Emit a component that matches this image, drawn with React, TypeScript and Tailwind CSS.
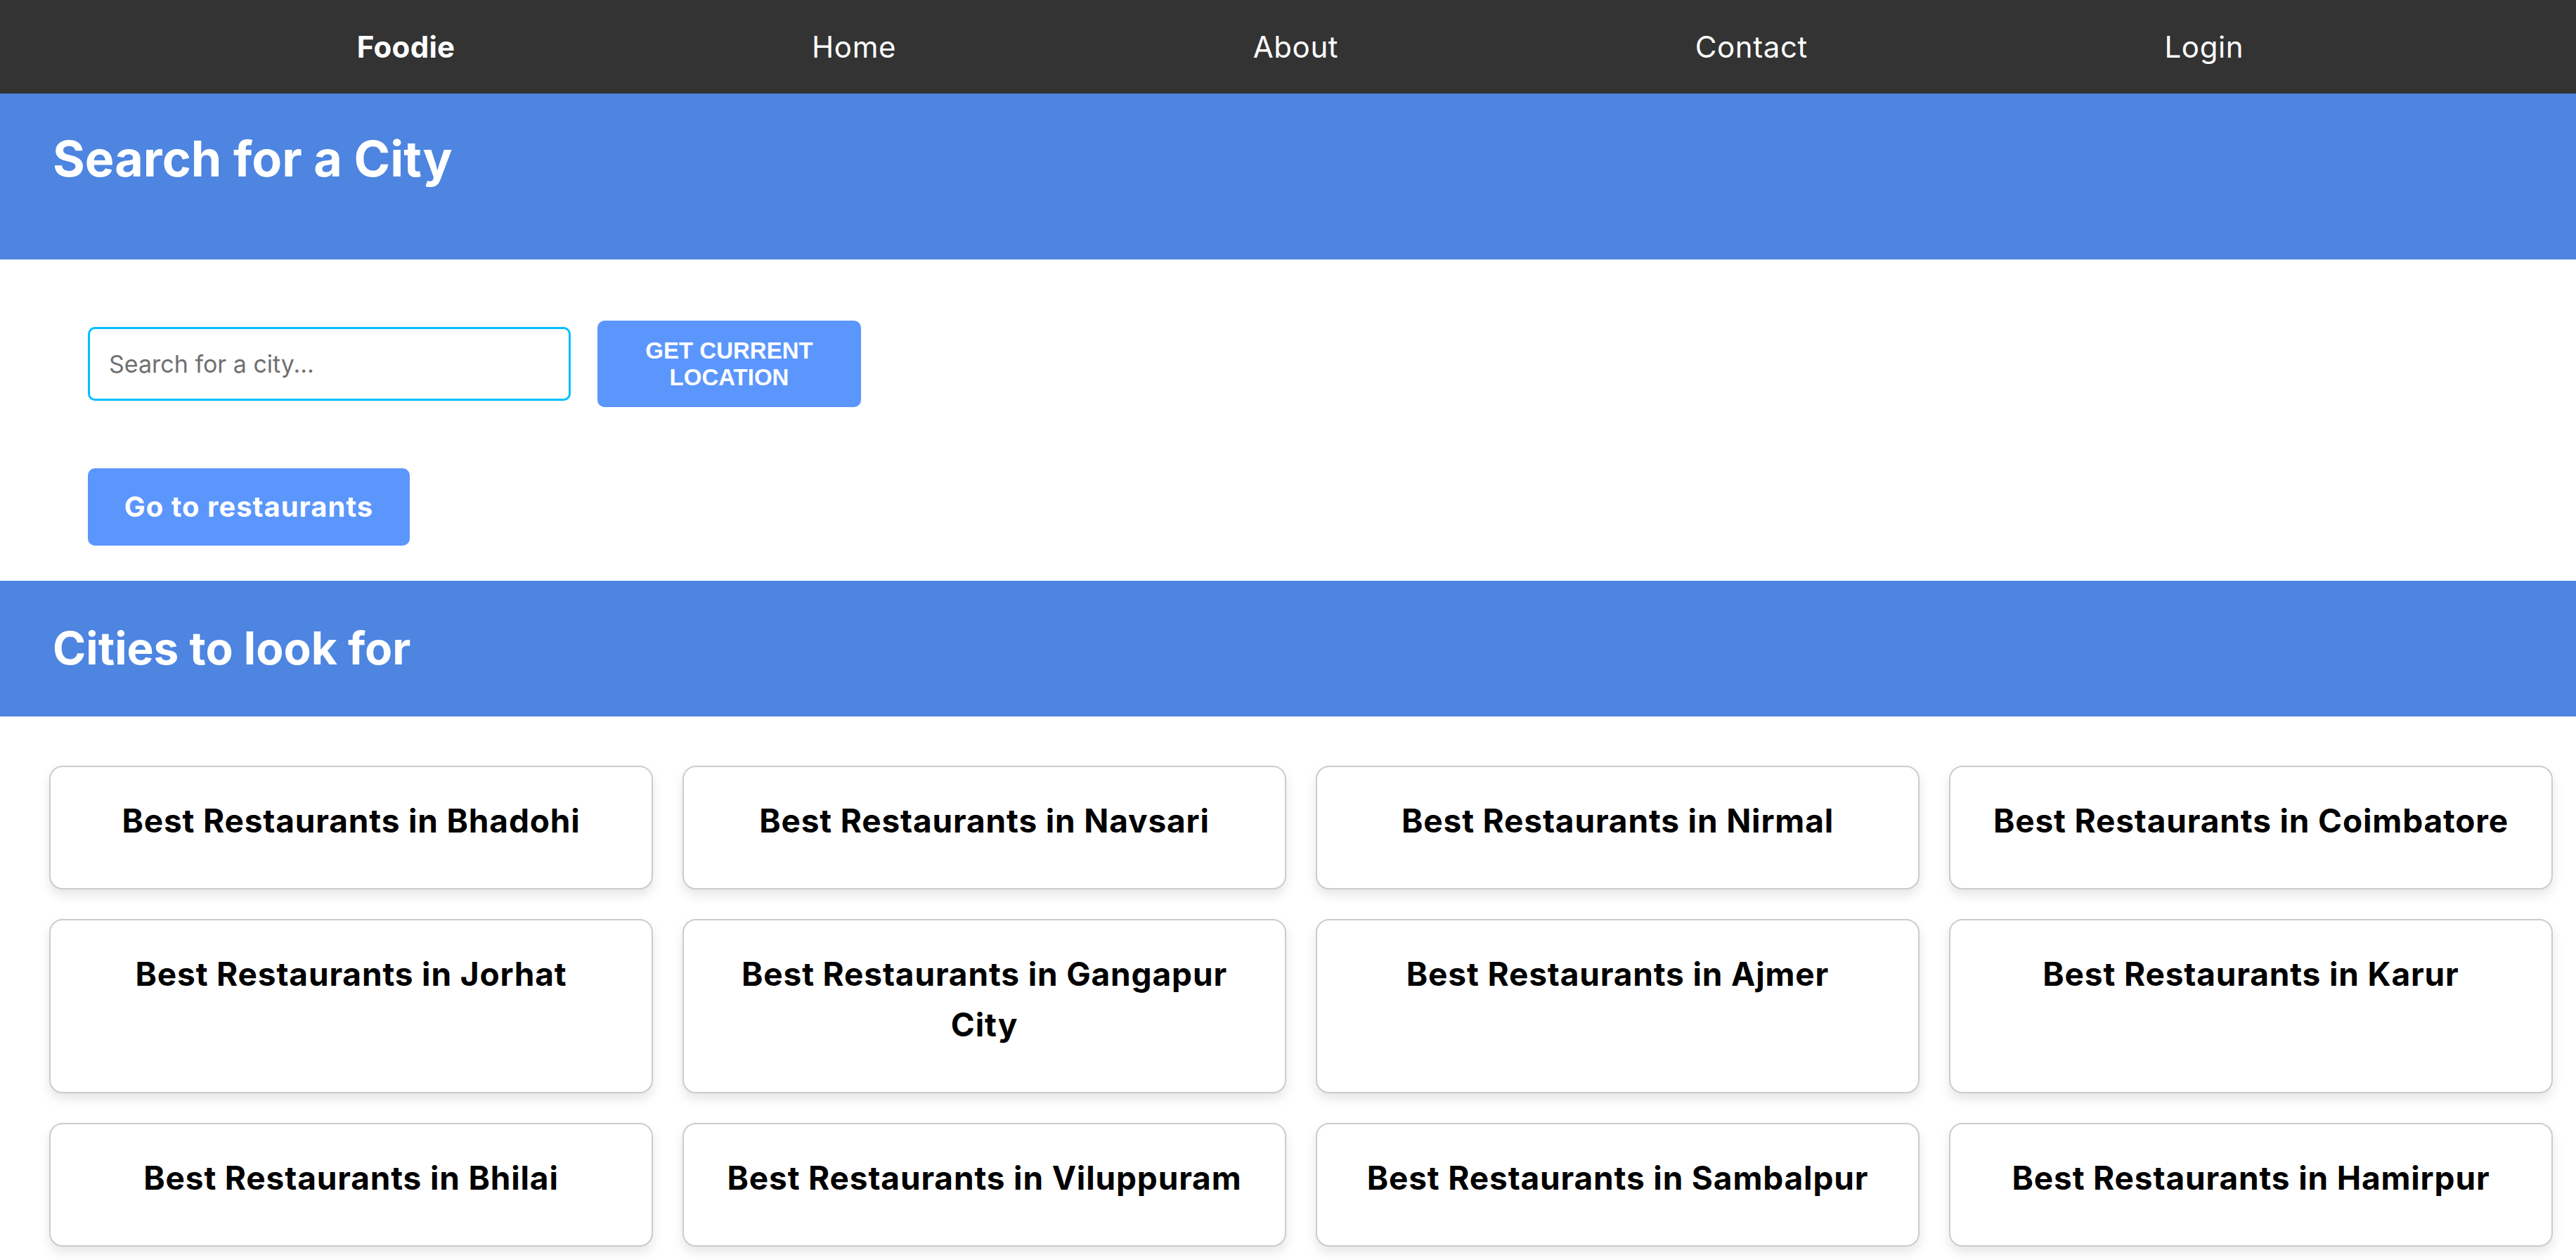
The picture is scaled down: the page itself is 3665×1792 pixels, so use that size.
import React from 'react';

const NAV = ['Home', 'About', 'Contact', 'Login'];

const CITIES = [
  'Bhadohi',
  'Navsari',
  'Nirmal',
  'Coimbatore',
  'Jorhat',
  'Gangapur City',
  'Ajmer',
  'Karur',
  'Bhilai',
  'Viluppuram',
  'Sambalpur',
  'Hamirpur',
];

export default function App() {
  return (
    <div className="min-h-screen bg-white font-['Inter',sans-serif]">
      {/* Top nav */}
      <nav className="h-[133px] bg-[#333333] flex items-center justify-around pl-[254px] pr-[219px]">
        <a className="text-white text-[42px] font-bold tracking-[0.3px]">Foodie</a>
        {NAV.map((item) => (
          <a key={item} className="text-white text-[42px] font-normal tracking-[0.6px]">
            {item}
          </a>
        ))}
      </nav>

      {/* Search band */}
      <section className="h-[236px] bg-[#4d85e1] px-[75px] pt-[53px]">
        <h1 className="text-white text-[70px] font-bold leading-[80px]">Search for a City</h1>
      </section>

      {/* Search controls */}
      <section className="pl-[125px] pt-[87px] pb-[50px]">
        <div className="flex items-center gap-[38px]">
          <input
            type="text"
            placeholder="Search for a city..."
            className="w-[687px] h-[105px] border-[3px] border-[#00bfff] rounded-[10px] px-[27px] text-[34px] outline-none placeholder:text-[#707070]"
          />
          <button className="w-[375px] h-[123px] bg-[#5b96fd] rounded-[10px] text-white font-['Liberation_Sans',Arial,sans-serif] font-bold text-[33px] leading-[38px] uppercase">
            Get current
            <br />
            location
          </button>
        </div>
        <button className="mt-[87px] w-[458px] h-[110px] bg-[#5b96fd] rounded-[10px] text-white text-[40px] font-bold tracking-[1px]">
          Go to restaurants
        </button>
      </section>

      {/* Cities band */}
      <section className="h-[193px] bg-[#4d85e1] px-[75px] pt-[56px]">
        <h2 className="text-white text-[64px] font-bold leading-[80px]">Cities to look for</h2>
      </section>

      {/* City cards */}
      <div className="grid grid-cols-4 gap-[42px] pl-[70px] pr-[33px] pt-[70px] pb-[60px]">
        {CITIES.map((city) => (
          <div
            key={city}
            className="bg-white border-2 border-[#cccccc] rounded-[19px] pt-[40px] pb-[60px] px-[40px] text-center shadow-[0_8px_16px_rgba(0,0,0,0.1)]"
          >
            <h3 className="text-black text-[46px] font-bold leading-[72px] tracking-[0.85px]">
              {`Best Restaurants in ${city}`}
            </h3>
          </div>
        ))}
      </div>
    </div>
  );
}
